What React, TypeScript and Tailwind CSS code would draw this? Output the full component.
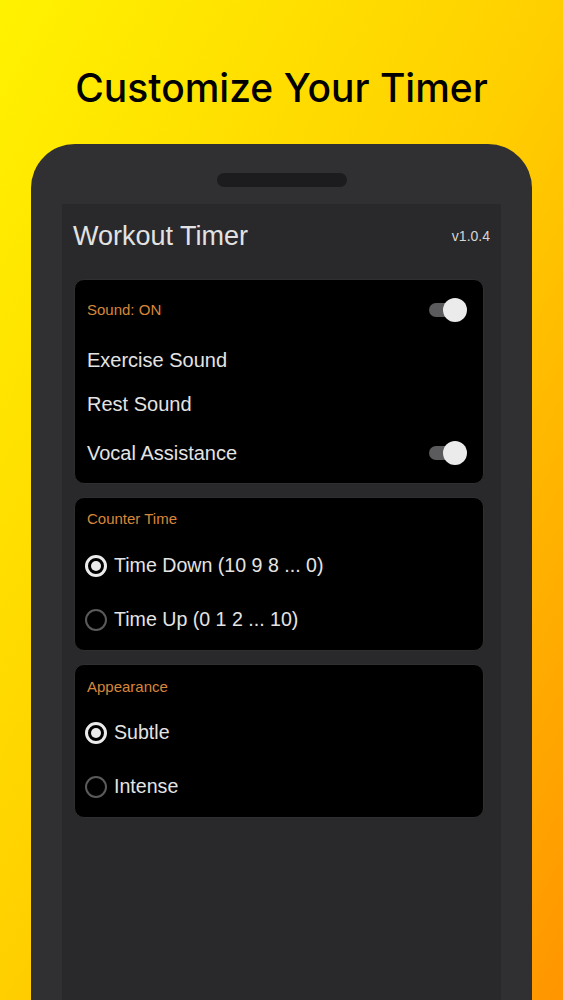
import React from "react";

function Toggle() {
  return (
    <div className="relative h-[24px] w-[38px]">
      <div className="absolute left-0 top-[5px] h-[14px] w-[34px] rounded-full bg-[#5b5b5d]" />
      <div className="absolute right-0 top-0 h-[24px] w-[24px] rounded-full bg-[#ebebeb]" />
    </div>
  );
}

function Radio({ checked }: { checked?: boolean }) {
  return checked ? (
    <span className="flex h-[22px] w-[22px] items-center justify-center rounded-full border-[3px] border-[#ececec]">
      <span className="h-[10px] w-[10px] rounded-full bg-[#ececec]" />
    </span>
  ) : (
    <span className="h-[22px] w-[22px] rounded-full border-2 border-[#5a5a5a]" />
  );
}

function RadioRow({ label, checked }: { label: string; checked?: boolean }) {
  return (
    <div className="flex h-[30px] items-center gap-[7px] pl-[10px]">
      <Radio checked={checked} />
      <span className="text-[19.6px] text-[#e4e4e4]">{label}</span>
    </div>
  );
}

export default function App() {
  return (
    <div
      className="flex h-[1000px] w-[563px] flex-col overflow-hidden bg-linear-to-br from-[#fff200] via-[#ffcf00] to-[#ff9500]"
      style={{ fontFamily: '"Liberation Sans", Arial, sans-serif' }}
    >
      <h1
        className="pt-[64px] text-center text-[39px] leading-[48px] font-medium text-black"
        style={{ fontFamily: "Inter, sans-serif" }}
      >
        Customize Your Timer
      </h1>

      <div className="mx-[31px] mt-[32px] flex flex-1 flex-col rounded-t-[44px] bg-[#303032] pt-[29px]">
        <div className="mx-auto h-[14px] w-[130px] rounded-full bg-[#1c1c1e]" />

        <div className="mx-[31px] mt-[17px] flex-1 bg-[#29282b] pl-[12px] pr-[17px]">
          <div className="flex items-center justify-between pt-[16px]">
            <span className="-ml-[1px] text-[27px] leading-[32px] text-[#e2e2e2]">Workout Timer</span>
            <span className="-mr-[6px] text-[14px] text-[#d6d6d6]">v1.0.4</span>
          </div>

          <div className="mt-[27px] flex flex-col gap-[13px]">
            <div className="rounded-[10px] border border-[#2f2f31] bg-black pb-[15px] pl-[12px] pr-[16px] pt-[18px]">
              <div className="flex h-[24px] items-center justify-between">
                <span className="text-[15px] text-[#d8873a]">Sound: ON</span>
                <Toggle />
              </div>
              <div className="mt-[23px] flex h-[30px] items-center text-[20px] text-[#e4e4e4]">Exercise Sound</div>
              <div className="mt-[14px] flex h-[30px] items-center text-[20px] text-[#e4e4e4]">Rest Sound</div>
              <div className="mt-[19px] flex h-[30px] items-center justify-between">
                <span className="text-[20px] text-[#e4e4e4]">Vocal Assistance</span>
                <Toggle />
              </div>
            </div>

            <div className="rounded-[10px] border border-[#2f2f31] bg-black pb-[15px] pt-[11px]">
              <div className="flex h-[20px] items-center pl-[12px] text-[15px] text-[#d8873a]">Counter Time</div>
              <div className="mt-[22px]">
                <RadioRow label="Time Down (10 9 8 ... 0)" checked />
              </div>
              <div className="mt-[24px]">
                <RadioRow label="Time Up (0 1 2 ... 10)" />
              </div>
            </div>

            <div className="rounded-[10px] border border-[#2f2f31] bg-black pb-[15px] pt-[12px]">
              <div className="flex h-[20px] items-center pl-[12px] text-[15px] text-[#d8873a]">Appearance</div>
              <div className="mt-[21px]">
                <RadioRow label="Subtle" checked />
              </div>
              <div className="mt-[24px]">
                <RadioRow label="Intense" />
              </div>
            </div>
          </div>
        </div>
      </div>
    </div>
  );
}
